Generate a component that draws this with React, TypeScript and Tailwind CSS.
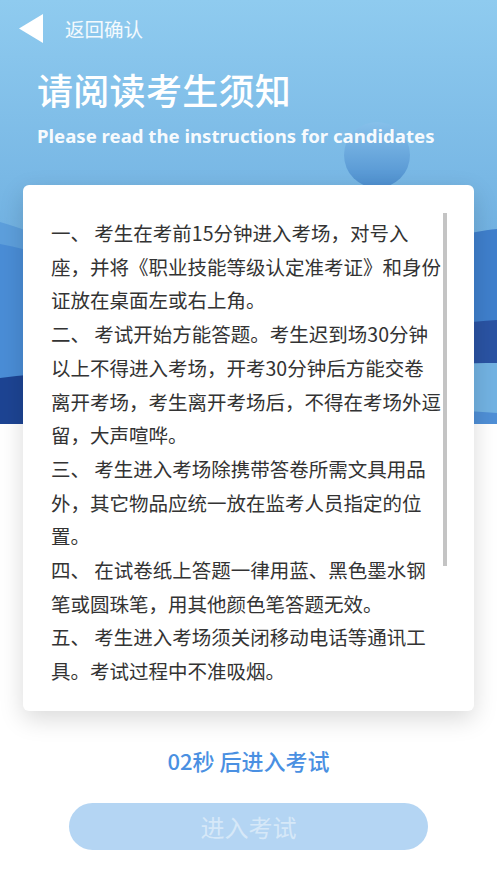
import React from 'react';

// 每行按原稿断行
const LINES = [
  '一、 考生在考前15分钟进入考场，对号入',
  '座，并将《职业技能等级认定准考证》和身份',
  '证放在桌面左或右上角。',
  '二、 考试开始方能答题。考生迟到场30分钟',
  '以上不得进入考场，开考30分钟后方能交卷',
  '离开考场，考生离开考场后，不得在考场外逗',
  '留，大声喧哗。',
  '三、 考生进入考场除携带答卷所需文具用品',
  '外，其它物品应统一放在监考人员指定的位',
  '置。',
  '四、 在试卷纸上答题一律用蓝、黑色墨水钢',
  '笔或圆珠笔，用其他颜色笔答题无效。',
  '五、 考生进入考场须关闭移动电话等通讯工',
  '具。考试过程中不准吸烟。',
];

const HeaderBg: React.FC = () => (
  <svg className="absolute left-0 top-0" width="497" height="424" viewBox="0 0 497 424">
    <defs>
      <linearGradient id="sky" x1="0" y1="0" x2="0" y2="1">
        <stop offset="0" stopColor="#8fcbef" />
        <stop offset="0.55" stopColor="#72b2e2" />
        <stop offset="1" stopColor="#6aaadc" />
      </linearGradient>
      <linearGradient id="ball" x1="0" y1="0" x2="0" y2="1">
        <stop offset="0" stopColor="#86c0ea" />
        <stop offset="1" stopColor="#4d8fcf" />
      </linearGradient>
    </defs>
    <rect width="497" height="424" fill="url(#sky)" />
    <circle cx="377" cy="155" r="33" fill="url(#ball)" />
    {/* left waves */}
    <path d="M0 222 C 30 230, 60 245, 90 262 L 90 424 L 0 424 Z" fill="#5d9fdc" />
    <path d="M0 244 C 30 250, 60 258, 90 270 L 90 424 L 0 424 Z" fill="#4a8dd6" />
    <path d="M0 378 C 30 374, 60 372, 90 374 L 90 424 L 0 424 Z" fill="#1d4493" />
    {/* right waves */}
    <path d="M400 250 C 430 240, 470 232, 497 229 L 497 424 L 400 424 Z" fill="#3f7fcc" />
    <path d="M400 330 C 430 326, 470 322, 497 320 L 497 424 L 400 424 Z" fill="#2a53a3" />
    <path d="M400 366 C 430 364, 470 363, 497 363 L 497 424 L 400 424 Z" fill="#72b2e2" />
    <path d="M400 408 C 430 409, 470 411, 497 413 L 497 424 L 400 424 Z" fill="#4f8fd6" />
  </svg>
);

export default function App() {
  return (
    <div
      className="relative w-[497px] h-[883px] overflow-hidden bg-white"
      style={{ fontFamily: '"Noto Sans CJK SC", "Noto Sans", sans-serif' }}
    >
      <HeaderBg />

      <div className="relative flex flex-col">
        {/* Nav */}
        <div className="flex items-center h-[29px] mt-[14px] pl-[19px]">
          <svg width="24" height="29" viewBox="0 0 24 29">
            <path d="M0 14.5 L24 0 L24 29 Z" fill="#ffffff" />
          </svg>
          <span className="ml-[22px] text-[19.5px] leading-none text-white/90">返回确认</span>
        </div>

        {/* Title */}
        <h1 className="mt-[26px] pl-[37px] text-[36px] leading-[40px] font-medium text-white tracking-[0.3px]">
          请阅读考生须知
        </h1>
        <p
          className="mt-[16px] pl-[37px] text-[18.6px] leading-[22px] font-bold text-white/95"
          style={{ fontFamily: '"Noto Sans", sans-serif' }}
        >
          Please read the instructions for candidates
        </p>

        {/* Card */}
        <div className="relative mx-[23px] mt-[38px] h-[526px] rounded-[6px] bg-white shadow-[0_8px_24px_rgba(0,0,0,0.15)] pl-[28px] pt-[31px]">
          <div className="text-[19.5px] leading-[33.7px] text-[#333333]">
            {LINES.map((l, i) => (
              <div key={i} className="whitespace-nowrap">{l}</div>
            ))}
          </div>
          <div className="absolute right-[27px] top-[28px] w-[4px] h-[353px] bg-[#c4c4c4]" />
        </div>

        {/* Countdown */}
        <div className="mt-[35px] text-center text-[22px] leading-[28px] font-medium text-[#4a90e2]">
          02秒 后进入考试
        </div>

        {/* Button */}
        <button className="mx-auto mt-[29px] w-[359px] h-[47px] rounded-full bg-[#b4d5f3] text-[24px] text-[#d6e8f8]">
          进入考试
        </button>
      </div>
    </div>
  );
}
